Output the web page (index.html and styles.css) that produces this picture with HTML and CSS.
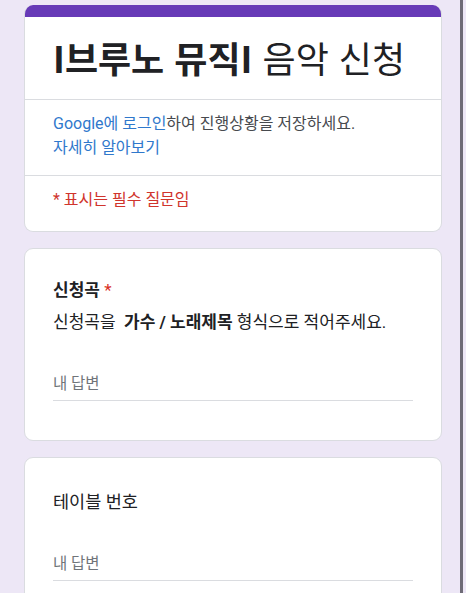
FILE: index.html
```html
<!DOCTYPE html>
<html lang="ko">
<head>
<meta charset="utf-8">
<link rel="stylesheet" href="styles.css">
</head>
<body>
<div class="page">
  <div class="card header-card">
    <div class="band"></div>
    <div class="title-sec">
      <h1 class="title"><b>I브루노 뮤직I</b> 음악 신청</h1>
    </div>
    <div class="login-sec">
      <p class="login"><a class="link">Google에 로그인</a>하여 진행상황을 저장하세요.<br><a class="link">자세히 알아보기</a></p>
    </div>
    <div class="req-sec">
      <p class="req">* 표시는 필수 질문임</p>
    </div>
  </div>

  <div class="card q-card">
    <div class="q-title bold">신청곡 <span class="star">*</span></div>
    <div class="q-desc">신청곡을&nbsp; <b>가수 / 노래제목</b> 형식으로 적어주세요.</div>
    <div class="answer">내 답변</div>
  </div>

  <div class="card q-card q3">
    <div class="q-title big">테이블 번호</div>
    <div class="answer">내 답변</div>
  </div>
</div>
<div class="scrollbar"></div>
</body>
</html>
```

FILE: styles.css
```css
* { box-sizing: border-box; }
html, body { margin: 0; padding: 0; }
body {
  background: #ede7f6;
  font-family: Roboto, "Noto Sans CJK KR", sans-serif;
  color: #202124;
  width: 466px;
  height: 593px;
  overflow: hidden;
}
.page {
  padding: 5px 0 0 24px;
  width: 442px;
  display: flex;
  flex-direction: column;
  gap: 16px;
}
.card {
  background: #fff;
  border: 1px solid #dadce0;
  border-radius: 9px;
  overflow: hidden;
}
.header-card { border-top: none; }
.band {
  height: 12px;
  background: #673ab7;
  margin: 0 -1px;
}
.title-sec {
  padding: 18px 28px 20px;
  border-bottom: 1px solid #dadce0;
}
.title {
  margin: 0;
  font-size: 36px;
  line-height: 44px;
  font-weight: 400;
  font-family: "Noto Sans CJK KR", sans-serif;
  color: #202124;
  white-space: nowrap;
}
.title b { font-weight: 700; }
.login-sec {
  padding: 12px 28px 15px;
  border-bottom: 1px solid #dadce0;
}
.login {
  margin: 0;
  font-size: 16px;
  line-height: 24px;
  color: #474a4e;
  white-space: nowrap;
}
.link { color: #2f78cc; }
.req-sec { padding: 12px 28px 19px; }
.req {
  margin: 0;
  font-size: 16px;
  line-height: 24px;
  color: #d0342c;
}
.q-card {
  padding: 29px 28px 39px;
}
.q-title {
  font-size: 17px;
  line-height: 24px;
  color: #202124;
}
.q-title.bold { font-weight: 700; }
.q-title.big { font-size: 17.5px; line-height: 30px; }
.star { color: #d93025; font-weight: 400; }
.q-desc {
  margin-top: 8px;
  font-size: 17px;
  line-height: 24px;
  color: #202124;
  white-space: nowrap;
}
.q-desc b { font-weight: 700; }
.answer {
  margin-top: 38px;
  font-size: 15.5px;
  line-height: 24px;
  color: #70757a;
  padding-bottom: 4px;
  border-bottom: 1px solid #dadce0;
}
.q3 .answer { margin-top: 35px; }
.scrollbar {
  position: fixed;
  top: 0;
  bottom: 0;
  left: 460px;
  width: 3px;
  background: #6e6b76;
}
```
